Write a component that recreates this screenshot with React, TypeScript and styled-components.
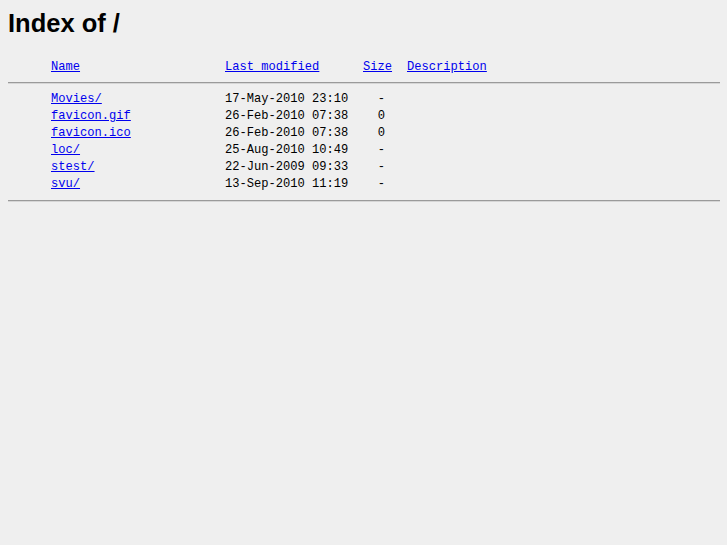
import styled, { createGlobalStyle } from "styled-components";

const GlobalStyle = createGlobalStyle`
  html, body {
    margin: 0;
    padding: 0;
    background-color: #efefef;
  }
`;

type Entry = {
  name: string;
  modified: string;
  size: string;
};

const entries: Entry[] = [
  { name: "Movies/", modified: "17-May-2010 23:10", size: "-" },
  { name: "favicon.gif", modified: "26-Feb-2010 07:38", size: "0" },
  { name: "favicon.ico", modified: "26-Feb-2010 07:38", size: "0" },
  { name: "loc/", modified: "25-Aug-2010 10:49", size: "-" },
  { name: "stest/", modified: "22-Jun-2009 09:33", size: "-" },
  { name: "svu/", modified: "13-Sep-2010 11:19", size: "-" },
];

export default function App() {
  return (
    <Page>
      <GlobalStyle />
      <Title>Index of /</Title>

      <Listing>
        <Row $head>
          <IconSpace />
          <Cell>
            <Link href="#">Name</Link>
          </Cell>
          <Cell>
            <Link href="#">Last modified</Link>
          </Cell>
          <Cell>
            <Link href="#">Size</Link>
          </Cell>
          <Cell>
            <Link href="#">Description</Link>
          </Cell>
        </Row>

        <Rule />

        <Rows>
          {entries.map((entry) => (
            <Row key={entry.name}>
              <IconSpace />
              <Cell>
                <Link href="#">{entry.name}</Link>
              </Cell>
              <Cell>{entry.modified}</Cell>
              <SizeCell>{entry.size}</SizeCell>
              <Cell />
            </Row>
          ))}
        </Rows>

        <Rule />
      </Listing>
    </Page>
  );
}

const Page = styled.div`
  padding: 8px 7px 8px 8px;
  min-height: 545px;
  box-sizing: border-box;
  color: #000000;
`;

const Title = styled.h1`
  margin: 0 0 21px 0;
  font-family: "Liberation Sans", Arial, sans-serif;
  font-size: 25.5px;
  font-weight: bold;
  line-height: 30px;
`;

const Listing = styled.div`
  display: flex;
  flex-direction: column;
  font-family: "Liberation Mono", "Courier New", monospace;
  font-size: 12.1px;
`;

const Rows = styled.div`
  display: flex;
  flex-direction: column;
  padding: 7px 0 7px 0;
`;

const Row = styled.div<{ $head?: boolean }>`
  display: grid;
  grid-template-columns: 43px 174px 138px 44px 1fr;
  align-items: center;
  height: 17px;
  line-height: 17px;
  margin-bottom: ${(p) => (p.$head ? "6px" : "0")};
  white-space: pre;
`;

const IconSpace = styled.span`
  display: block;
`;

const Cell = styled.span`
  display: block;
`;

const SizeCell = styled.span`
  display: block;
  text-align: right;
  padding-right: 22px;
`;

const Link = styled.a`
  color: #0000ee;
  text-decoration: underline;
`;

const Rule = styled.hr`
  margin: 0;
  height: 0;
  border: none;
  border-top: 1px solid #9a9a9a;
  border-bottom: 1px solid #d6d6d6;
`;
